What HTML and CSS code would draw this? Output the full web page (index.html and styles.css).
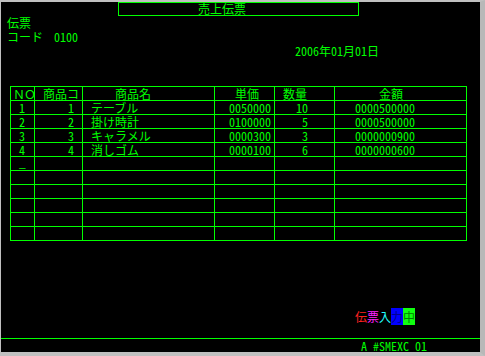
FILE: index.html
```html
<!DOCTYPE html>
<html lang="ja">
<head>
  <meta charset="UTF-8">
  <title>売上伝票</title>
  <link rel="stylesheet" href="styles.css">
</head>
<body>

  <div class="screen">
    <div class="title-row">
      <div class="title">売上伝票</div>
    </div>

    <div class="line">伝票</div>
    <div class="line"><span class="label">コード</span><span>0100</span></div>
    <div class="line date">2006年01月01日</div>

    <table class="grid">
      <colgroup>
        <col class="w-no">
        <col class="w-code">
        <col class="w-name">
        <col class="w-price">
        <col class="w-qty">
        <col class="w-amt">
      </colgroup>
      <thead>
        <tr>
          <th class="h-no">ＮＯ</th>
          <th class="h-code">商品コ</th>
          <th class="h-name">商品名</th>
          <th class="h-price">単価</th>
          <th class="h-qty">数量</th>
          <th class="h-amt">金額</th>
        </tr>
      </thead>
      <tbody>
        <tr><td class="c-no">1</td><td class="c-code">1</td><td class="c-name">テーブル</td><td class="c-price">0050000</td><td class="c-qty">10</td><td class="c-amt">0000500000</td></tr>
        <tr><td class="c-no">2</td><td class="c-code">2</td><td class="c-name">掛け時計</td><td class="c-price">0100000</td><td class="c-qty">5</td><td class="c-amt">0000500000</td></tr>
        <tr><td class="c-no">3</td><td class="c-code">3</td><td class="c-name">キャラメル</td><td class="c-price">0000300</td><td class="c-qty">3</td><td class="c-amt">0000000900</td></tr>
        <tr><td class="c-no">4</td><td class="c-code">4</td><td class="c-name">消しゴム</td><td class="c-price">0000100</td><td class="c-qty">6</td><td class="c-amt">0000000600</td></tr>
        <tr><td class="c-no cursor">_</td><td></td><td></td><td></td><td></td><td></td></tr>
        <tr><td></td><td></td><td></td><td></td><td></td><td></td></tr>
        <tr><td></td><td></td><td></td><td></td><td></td><td></td></tr>
        <tr><td></td><td></td><td></td><td></td><td></td><td></td></tr>
        <tr><td></td><td></td><td></td><td></td><td></td><td></td></tr>
        <tr><td></td><td></td><td></td><td></td><td></td><td></td></tr>
      </tbody>
    </table>

    <div class="spacer"></div>

    <!-- 状態メッセージ -->
    <div class="message"><span class="m-red">伝</span><span class="m-pink">票</span><span class="m-cyan">入</span><span class="m-blue">力</span><span class="m-green">中</span></div>

    <div class="status">A #SMEXC 01</div>
  </div>

</body>
</html>
```

FILE: styles.css
```css
body {
  margin: 0;
  background-color: #c0c0c0;
  font-family: "Noto Sans CJK JP", sans-serif;
  font-feature-settings: "hwid";
  font-size: 12px;
  color: #00ff00;
}

.screen {
  display: flex;
  flex-direction: column;
  box-sizing: border-box;
  width: 485px;
  height: 356px;
  background-color: #000;
  border-top: 2px solid #c0c0c0;
  border-left: 1px solid #c0c0c0;
  border-right: 5px solid #b8b8b8;
  border-bottom: 4px solid #c0c0c0;
}

.title-row {
  display: flex;
  padding-left: 117px;
}

.title {
  box-sizing: border-box;
  width: 241px;
  height: 14px;
  border: 1px solid #00ff00;
  padding-left: 79px;
  line-height: 12px;
  white-space: nowrap;
}

.line {
  height: 14px;
  line-height: 14px;
  padding-left: 6px;
  white-space: nowrap;
}

.label {
  display: inline-block;
  width: 47px;
}

.date {
  padding-left: 294px;
}

.grid {
  margin-top: 28px;
  margin-left: 9px;
  width: 457px;
  table-layout: fixed;
  border-collapse: collapse;
  border: 1px solid #00ff00;
}

.w-no { width: 24px; }
.w-code { width: 48px; }
.w-name { width: 132px; }
.w-price { width: 60px; }
.w-qty { width: 60px; }
.w-amt { width: 132px; }

.grid th,
.grid td {
  border: 1px solid #00ff00;
  height: 13px;
  padding: 0;
  line-height: 13px;
  font-weight: normal;
  text-align: left;
  white-space: nowrap;
  overflow: hidden;
  vertical-align: top;
}

.grid th.h-no {
  padding-left: 2px;
  font-feature-settings: normal;
  letter-spacing: -1px;
}
.grid th.h-code { padding-left: 8px; }
.grid th.h-name { padding-left: 32px; }
.grid th.h-price { padding-left: 20px; }
.grid th.h-qty { padding-left: 8px; }
.grid th.h-amt { padding-left: 44px; }

.grid td.c-no { padding-left: 8px; }
.grid td.c-code { padding-right: 8px; text-align: right; }
.grid td.c-name { padding-left: 8px; }
.grid td.c-price { padding-left: 14px; }
.grid td.c-qty { padding-right: 26px; text-align: right; }
.grid td.c-amt { padding-left: 20px; }

.grid td.cursor {
  font-feature-settings: normal;
  line-height: 9px;
}

.spacer {
  flex: 1;
}

.message {
  height: 14px;
  line-height: 14px;
  padding-left: 354px;
  margin-bottom: 14px;
  white-space: nowrap;
}

.m-red { color: #ff2020; }
.m-pink { color: #ff20ff; }
.m-cyan { color: #20ffff; }
.m-blue { color: #000090; background-color: #0000ff; }
.m-green { color: #008000; background-color: #10ff10; }

.status {
  height: 13px;
  line-height: 13px;
  border-top: 1px solid #00ff00;
  padding-left: 360px;
  white-space: nowrap;
}
```
